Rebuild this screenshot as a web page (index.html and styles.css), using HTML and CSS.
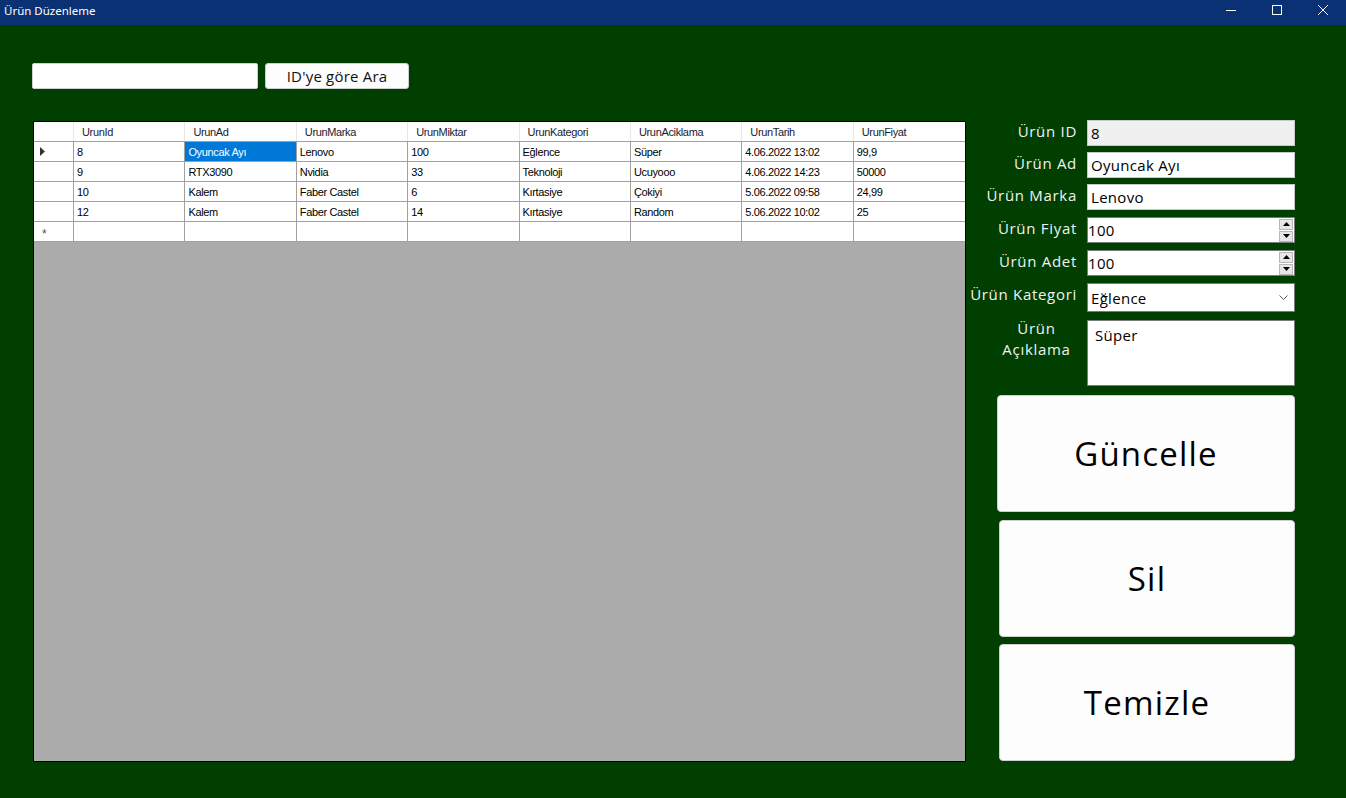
FILE: index.html
```html
<!DOCTYPE html>
<html lang="tr">
<head>
<meta charset="utf-8">
<title>Ürün Düzenleme</title>
<link rel="stylesheet" href="styles.css">
</head>
<body>
<div class="titlebar">
  <span class="title">Ürün Düzenleme</span>
  <div class="winctl">
    <span class="wbtn"><svg width="12" height="12" viewBox="0 0 12 12"><path d="M1 6.5h10" stroke="#fff" stroke-width="1"/></svg></span>
    <span class="wbtn"><svg width="12" height="12" viewBox="0 0 12 12"><rect x="1.5" y="1.5" width="9" height="9" fill="none" stroke="#fff" stroke-width="1"/></svg></span>
    <span class="wbtn"><svg width="12" height="12" viewBox="0 0 12 12"><path d="M1 1l10 10M11 1L1 11" stroke="#fff" stroke-width="1"/></svg></span>
  </div>
</div>
<div class="content">
  <div class="search">
    <div class="search-input"></div>
    <div class="search-btn">ID'ye göre Ara</div>
  </div>
  <div class="main">
    <div class="grid">
      <div class="row head">
        <div class="rh"></div>
        <div class="c">UrunId</div><div class="c">UrunAd</div><div class="c">UrunMarka</div><div class="c">UrunMiktar</div><div class="c">UrunKategori</div><div class="c">UrunAciklama</div><div class="c">UrunTarih</div><div class="c">UrunFiyat</div>
      </div>
      <div class="row">
        <div class="rh"><svg width="6" height="9" viewBox="0 0 6 9"><path d="M0 0l5 4.5L0 9z" fill="#333"/></svg></div>
        <div class="c">8</div><div class="c sel">Oyuncak Ayı</div><div class="c">Lenovo</div><div class="c">100</div><div class="c">Eğlence</div><div class="c">Süper</div><div class="c">4.06.2022 13:02</div><div class="c">99,9</div>
      </div>
      <div class="row">
        <div class="rh"></div>
        <div class="c">9</div><div class="c">RTX3090</div><div class="c">Nvidia</div><div class="c">33</div><div class="c">Teknoloji</div><div class="c">Ucuyooo</div><div class="c">4.06.2022 14:23</div><div class="c">50000</div>
      </div>
      <div class="row">
        <div class="rh"></div>
        <div class="c">10</div><div class="c">Kalem</div><div class="c">Faber Castel</div><div class="c">6</div><div class="c">Kırtasiye</div><div class="c">Çokiyi</div><div class="c">5.06.2022 09:58</div><div class="c">24,99</div>
      </div>
      <div class="row">
        <div class="rh"></div>
        <div class="c">12</div><div class="c">Kalem</div><div class="c">Faber Castel</div><div class="c">14</div><div class="c">Kırtasiye</div><div class="c">Random</div><div class="c">5.06.2022 10:02</div><div class="c">25</div>
      </div>
      <div class="row">
        <div class="rh"><span class="star">*</span></div>
        <div class="c"></div><div class="c"></div><div class="c"></div><div class="c"></div><div class="c"></div><div class="c"></div><div class="c"></div><div class="c"></div>
      </div>
    </div>
    <div class="panel">
      <div class="form">
        <label class="lbl l-id">Ürün ID</label><div class="field f-id ro">8</div>
        <label class="lbl l-ad">Ürün Ad</label><div class="field f-ad">Oyuncak Ayı</div>
        <label class="lbl l-marka">Ürün Marka</label><div class="field f-marka">Lenovo</div>
        <label class="lbl l-fiyat">Ürün Fiyat</label><div class="field f-fiyat num"><span class="nv">100</span><span class="spin"><span class="sb"><svg width="7" height="4" viewBox="0 0 7 4"><path d="M0 4L3.5 0 7 4z" fill="#000"/></svg></span><span class="sb"><svg width="7" height="4" viewBox="0 0 7 4"><path d="M0 0h7L3.5 4z" fill="#000"/></svg></span></span></div>
        <label class="lbl l-adet">Ürün Adet</label><div class="field f-adet num"><span class="nv">100</span><span class="spin"><span class="sb"><svg width="7" height="4" viewBox="0 0 7 4"><path d="M0 4L3.5 0 7 4z" fill="#000"/></svg></span><span class="sb"><svg width="7" height="4" viewBox="0 0 7 4"><path d="M0 0h7L3.5 4z" fill="#000"/></svg></span></span></div>
        <label class="lbl l-kat">Ürün Kategori</label><div class="field f-kat combo"><span>Eğlence</span><svg width="9" height="6" viewBox="0 0 9 6"><path d="M0.5 0.5l4 4 4-4" fill="none" stroke="#555" stroke-width="1"/></svg></div>
        <label class="lbl l-acik">Ürün<br>Açıklama</label><div class="field f-acik area">Süper</div>
      </div>
      <div class="buttons">
        <div class="bigbtn b1">Güncelle</div>
        <div class="bigbtn b2">Sil</div>
        <div class="bigbtn b3">Temizle</div>
      </div>
    </div>
  </div>
</div>
</body>
</html>
```
FILE: styles.css
```css
* { box-sizing: border-box; }
html, body { margin: 0; padding: 0; }
body {
  width: 1346px;
  height: 798px;
  background: #003f00;
  overflow: hidden;
  font-family: "Open Sans", "Liberation Sans", sans-serif;
}
.titlebar {
  height: 25px;
  background: #0b3175;
  color: #fff;
  display: flex;
  align-items: center;
  justify-content: space-between;
}
.title {
  font-family: "Noto Sans", "Liberation Sans", sans-serif;
  font-size: 11.5px;
  padding-left: 4px;
  margin-top: -4px;
}
.winctl { display: flex; height: 100%; }
.wbtn {
  width: 46px;
  display: flex;
  align-items: center;
  justify-content: center;
  margin-top: -6px;
}
.content { padding: 38px 0 0 32px; }
.search { display: flex; gap: 7px; height: 26px; }
.search-input {
  width: 226px;
  height: 26px;
  background: #fff;
  border: 1px solid #d0d0d0;
  border-radius: 2px;
}
.search-btn {
  width: 144px;
  height: 26px;
  background: #fdfdfd;
  border: 1px solid #cfcfcf;
  border-radius: 3px;
  font-size: 15px;
  color: #111;
  display: flex;
  align-items: center;
  justify-content: center;
  letter-spacing: 0.2px;
}
.main { display: flex; margin-top: 32px; }
.grid {
  width: 933px;
  height: 641px;
  margin-left: 1px;
  background: #ababab;
  border: 1px solid #000;
  font-family: "Liberation Sans", Arial, sans-serif;
  font-size: 11px;
  letter-spacing: -0.35px;
  color: #000;
}
.row {
  display: grid;
  grid-template-columns: 40px repeat(8, 111.4px);
  height: 20px;
  background: #fff;
  border-bottom: 1px solid #a0a0a0;
}
.row .rh, .row .c {
  border-right: 1px solid #a0a0a0;
  display: flex;
  align-items: center;
  padding-left: 3px;
  white-space: nowrap;
  overflow: hidden;
}
.row .rh { padding-left: 6px; }
.head .c { padding-left: 8px; border-right-color: #e6e6e6; color: #1a1a2e; }
.head .rh { border-right-color: #e6e6e6; }
.row .c:last-child { border-right: none; }
.sel { background: #0078d7; color: #fff; }
.star { font-size: 12px; color: #555; margin-left: 2px; margin-top: 4px; }
.panel {
  width: 330px;
  display: flex;
  flex-direction: column;
}
.form {
  display: grid;
  grid-template-columns: 111px 208px;
  column-gap: 10px;
  grid-template-rows: 26px 26px 27px 27px 27px 31px 66px;
  row-gap: 6px;
  margin-top: -1px;
  font-size: 15px;
}
.lbl {
  color: #f2f2f2;
  text-align: right;
  padding-top: 1px;
  font-size: 15px;
  letter-spacing: 0.7px;
  white-space: nowrap;
}
.l-acik { line-height: 21px; text-align: center; padding-left: 30px; margin-top: -3px; }
.field {
  background: #fff;
  border: 1px solid #7a7a7a;
  color: #000;
  display: flex;
  align-items: center;
  padding-left: 3px;
  font-size: 15px;
  letter-spacing: 0.3px;
  height: 26px;
}
.ro { background: #f0f0f0; border-color: #c8c8c8; }
.f-ad, .f-marka { border-color: #c8c8c8; }
.num { justify-content: space-between; padding-left: 0; padding-right: 1px; }
.spin { display: flex; flex-direction: column; gap: 1px; }
.sb {
  width: 14px;
  height: 11px;
  background: #e6e6e6;
  border: 1px solid #b8b8b8;
  display: flex;
  align-items: center;
  justify-content: center;
}
.combo { justify-content: space-between; padding-right: 6px; height: 29px; }
.area { align-items: flex-start; padding: 4px 0 0 7px; height: 66px; }
.buttons {
  display: flex;
  flex-direction: column;
  align-items: flex-end;
  margin-top: 9px;
  padding-right: 1px;
}
.bigbtn {
  background: #fdfdfd;
  border: 1px solid #cfcfcf;
  border-radius: 4px;
  height: 117px;
  display: flex;
  align-items: center;
  justify-content: center;
  font-size: 33px;
  color: #000;
  letter-spacing: 1.2px;
}
.b1 { width: 298px; }
.b2 { width: 296px; margin-top: 8px; }
.b3 { width: 296px; margin-top: 7px; }
```
